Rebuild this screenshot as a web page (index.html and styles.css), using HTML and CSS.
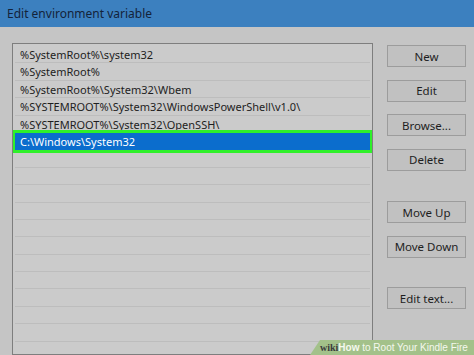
FILE: index.html
```html
<!DOCTYPE html>
<html lang="en">
<head>
    <meta charset="UTF-8">
    <title>Edit environment variable</title>
    <link rel="stylesheet" href="styles.css">
</head>
<body>
    <div class="dialog">
        <header class="titlebar">Edit environment variable</header>
        <main class="content">
            <!-- Path entries -->
            <div class="list">
                <div class="row">%SystemRoot%\system32</div>
                <div class="row">%SystemRoot%</div>
                <div class="row">%SystemRoot%\System32\Wbem</div>
                <div class="row">%SYSTEMROOT%\System32\WindowsPowerShell\v1.0\</div>
                <div class="row">%SYSTEMROOT%\System32\OpenSSH\</div>
                <div class="row selected">C:\Windows\System32</div>
                <div class="row"></div>
                <div class="row"></div>
                <div class="row"></div>
                <div class="row"></div>
                <div class="row"></div>
                <div class="row"></div>
                <div class="row"></div>
                <div class="row"></div>
                <div class="row"></div>
                <div class="row"></div>
                <div class="row"></div>
            </div>

            <!-- Actions -->
            <div class="buttons">
                <button>New</button>
                <button>Edit</button>
                <button>Browse...</button>
                <button>Delete</button>
                <button class="spaced">Move Up</button>
                <button>Move Down</button>
                <button class="spaced-lg">Edit text...</button>
            </div>
        </main>
    </div>

    <div class="watermark"><b class="wiki">wiki</b><b>How</b> to Root Your Kindle Fire</div>
</body>
</html>
```

FILE: styles.css
```css
* {
    margin: 0;
    padding: 0;
    box-sizing: border-box;
}

body {
    width: 474px;
    height: 355px;
    overflow: hidden;
    position: relative;
    background: #c5c5c5;
    font-family: 'Noto Sans', 'Open Sans', sans-serif;
    color: #1e1e1e;
}

.titlebar {
    height: 27px;
    background: #3c80bf;
    color: #13233a;
    font-size: 12px;
    line-height: 27px;
    padding-left: 7px;
}

.content {
    display: flex;
    align-items: flex-start;
    padding: 16px 0 0 12px;
}

.list {
    width: 361px;
    height: 312px;
    overflow: hidden;
    background: #cbcbcb;
    border: 1px solid #7e7e7e;
    padding: 2px 2px 0 2px;
    font-size: 11px;
}

.row {
    height: 17.4px;
    line-height: 17px;
    padding-left: 5px;
    border-bottom: 1px solid #bdbdbd;
    white-space: nowrap;
}

.row.selected {
    background: #0b6dcd;
    color: #fff;
    outline: 3.5px solid #2ff02a;
    border-bottom-color: #0b6dcd;
}

.buttons {
    display: flex;
    flex-direction: column;
    gap: 12.5px;
    margin: 2px 0 0 14px;
    width: 79px;
}

.buttons button {
    height: 22px;
    background: #c1c1c1;
    border: 1px solid #9c9c9c;
    font-family: inherit;
    font-size: 11.5px;
    color: #1e1e1e;
}

.buttons .spaced {
    margin-top: 18px;
}

.buttons .spaced-lg {
    margin-top: 17px;
}

.watermark {
    position: absolute;
    right: 0;
    bottom: 0;
    height: 15px;
    width: 164px;
    padding-left: 10px;
    background: #a3c18a;
    clip-path: polygon(10px 0, 100% 0, 100% 100%, 0 100%);
    color: #f4f8ee;
    font-family: 'Liberation Sans', sans-serif;
    font-size: 10px;
    line-height: 15px;
    white-space: nowrap;
}

.watermark .wiki {
    color: #3c3c3c;
    font-family: 'Liberation Serif', serif;
}
```
